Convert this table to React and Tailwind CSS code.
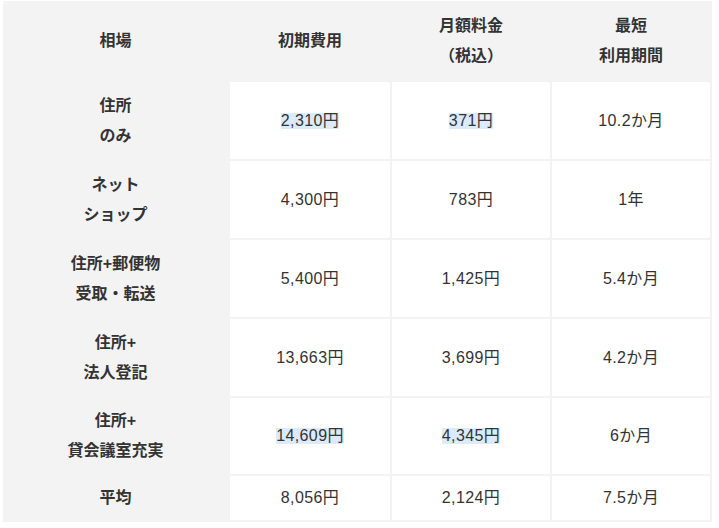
const rows = [
  { label: ['住所', 'のみ'], initial: '2,310円', monthly: '371円', term: '10.2か月', mark: true },
  { label: ['ネット', 'ショップ'], initial: '4,300円', monthly: '783円', term: '1年' },
  { label: ['住所+郵便物', '受取・転送'], initial: '5,400円', monthly: '1,425円', term: '5.4か月' },
  { label: ['住所+', '法人登記'], initial: '13,663円', monthly: '3,699円', term: '4.2か月' },
  { label: ['住所+', '貸会議室充実'], initial: '14,609円', monthly: '4,345円', term: '6か月', mark: true },
];

const Val = ({ text, mark }) =>
  mark ? <span className="bg-[#dcebfc] leading-[16px]">{text}</span> : <span>{text}</span>;

export default function App() {
  return (
    <div className="w-[719px] h-[528px] bg-white pt-[1px] pl-[3px]">
      <div
        className="w-[709px] grid grid-cols-[225px_160px_158px_158px] grid-rows-[79px_77px_77px_77px_77px_76px_44px] gap-[2px] pr-[2px] pb-[2px] bg-[#f3f3f3] text-[#333] text-[16px] leading-[30px]"
        style={{ fontFamily: '"Liberation Sans", "Noto Sans CJK JP", sans-serif' }}
      >
        <div className="flex items-center justify-center font-bold">相場</div>
        <div className="flex items-center justify-center font-bold">初期費用</div>
        <div className="flex flex-col items-center justify-center font-bold">
          <div>月額料金</div>
          <div>（税込）</div>
        </div>
        <div className="flex flex-col items-center justify-center font-bold">
          <div>最短</div>
          <div>利用期間</div>
        </div>

        {rows.map((r) => (
          <div key={r.initial} className="contents">
            <div className="flex flex-col items-center justify-center font-bold">
              <div>{r.label[0]}</div>
              <div>{r.label[1]}</div>
            </div>
            <div className="flex items-center justify-center bg-white tracking-[0.4px]">
              <Val text={r.initial} mark={r.mark} />
            </div>
            <div className="flex items-center justify-center bg-white tracking-[0.4px]">
              <Val text={r.monthly} mark={r.mark} />
            </div>
            <div className="flex items-center justify-center bg-white tracking-[0.4px]">{r.term}</div>
          </div>
        ))}

        <div className="flex items-center justify-center font-bold">平均</div>
        <div className="flex items-center justify-center bg-white tracking-[0.4px]">8,056円</div>
        <div className="flex items-center justify-center bg-white tracking-[0.4px]">2,124円</div>
        <div className="flex items-center justify-center bg-white tracking-[0.4px]">7.5か月</div>
      </div>
    </div>
  );
}
